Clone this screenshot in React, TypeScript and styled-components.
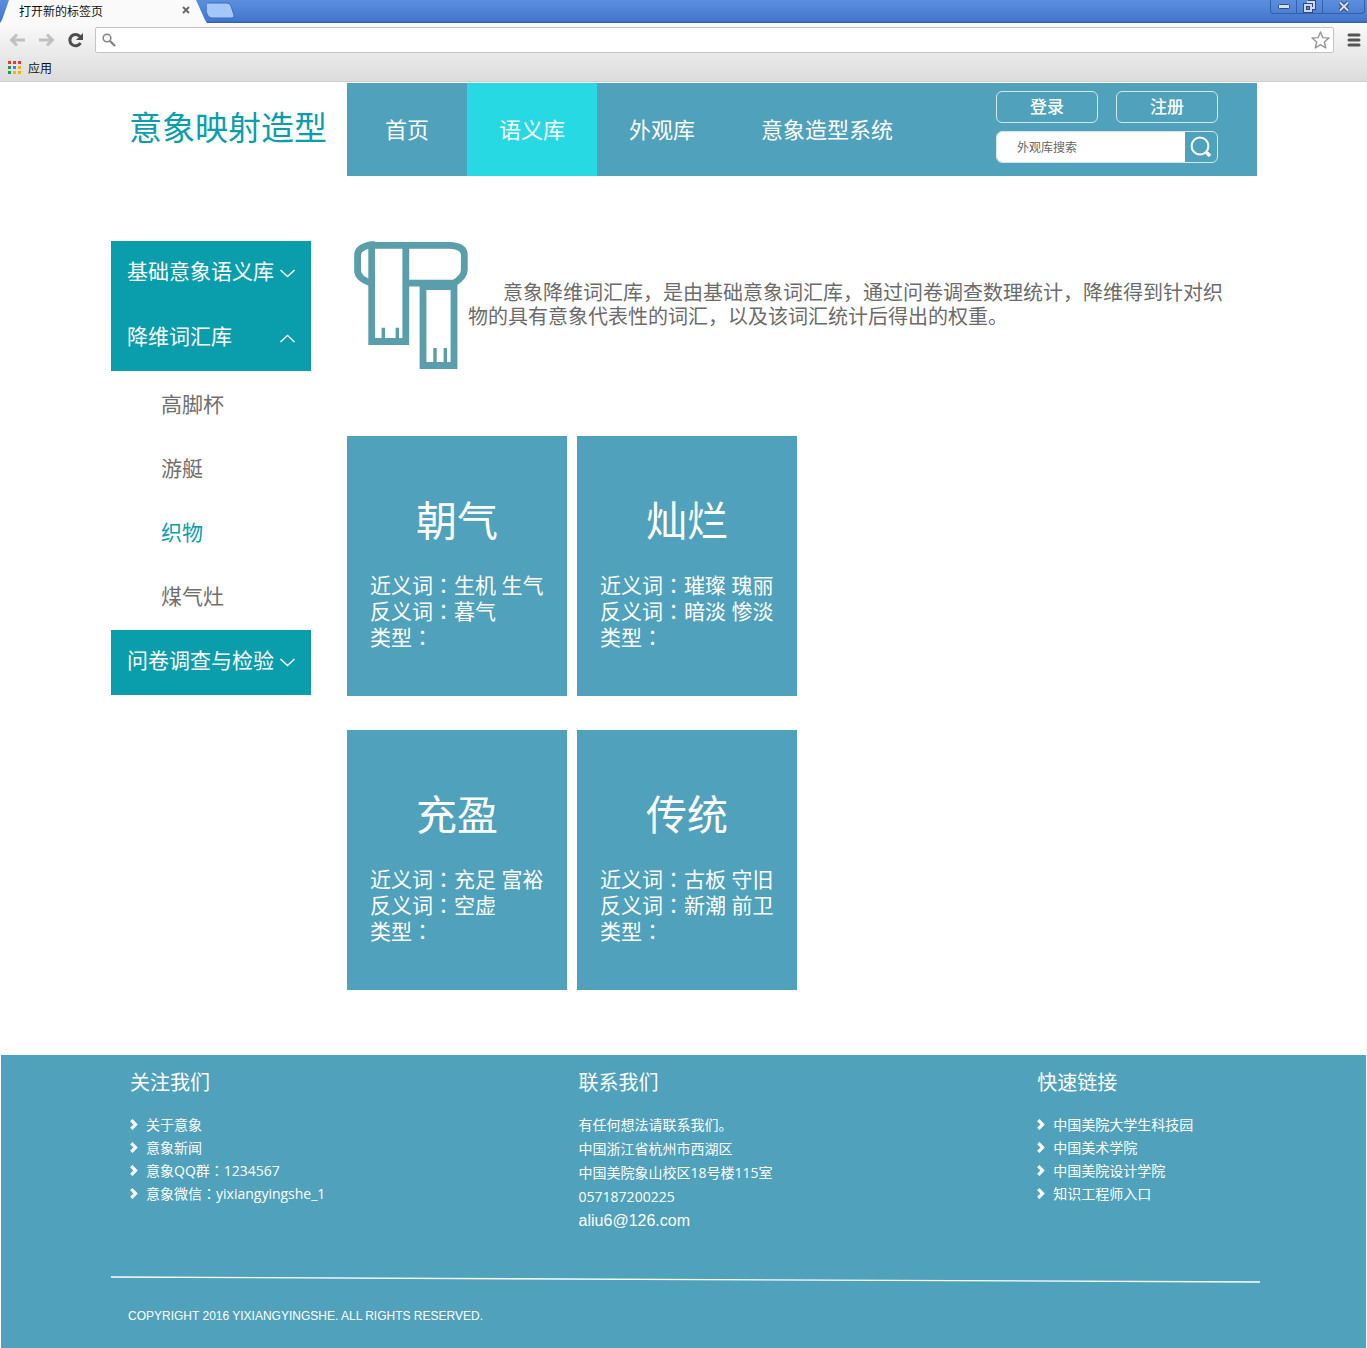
import React from "react";
import styled, { createGlobalStyle } from "styled-components";

const blue = "#50a1bb";
const teal = "#0a9dac";
const cyan = "#27d9e3";
const sans = `"Open Sans", "Noto Sans CJK SC", sans-serif`;

const GlobalStyle = createGlobalStyle`
  * { box-sizing: border-box; }
  body { margin: 0; background: #fff; font-family: ${sans}; }
  h1, h2, h3, p, ul { margin: 0; padding: 0; font-weight: 400; }
  ul { list-style: none; }
  a { color: inherit; text-decoration: none; }
  button { font: inherit; color: inherit; background: none; border: 0; padding: 0; cursor: pointer; }
  svg { display: block; }
`;

/* ---------- browser frame ---------- */

const Browser = styled.div`
  height: 82px;
  margin-bottom: 1px;
  color: #111;
  font-family: "Noto Sans CJK SC", sans-serif;
  font-size: 12px;
  background: linear-gradient(#fafafa 23px, #dcdcdc 81px);
  border-bottom: 1px solid #cfcfcf;
`;

const TabStrip = styled.div`
  display: flex;
  height: 23px;
  background: linear-gradient(#5b8fde, #4377cb 21px, #2f5ba3);
`;

const Tab = styled.div`
  display: flex;
  align-items: center;
  justify-content: space-between;
  width: 207px;
  height: 23px;
  padding: 0 17px 3px 19px;
  background: #fafafa;
  clip-path: polygon(9px 0, 196px 0, 205px 20px, 207px 23px, 0 23px, 2px 20px);
`;

const TabClose = styled.button`
  display: flex;
`;

const NewTab = styled.button`
  align-self: flex-start;
`;

const WindowButtons = styled.div`
  display: flex;
  height: 14px;
  margin-left: auto;
  margin-right: 2px;
  border: 1px solid #335fae;
  border-top: 0;
  border-radius: 0 0 4px 4px;
`;

const WindowButton = styled.button<{ $w: number }>`
  display: flex;
  align-items: center;
  justify-content: center;
  width: ${(p) => p.$w}px;
  & + & { border-left: 1px solid #335fae; }
`;

const Toolbar = styled.div`
  display: flex;
  align-items: center;
  height: 33px;
  padding: 0 6px 0 8px;
`;

const ToolButton = styled.button`
  display: flex;
  justify-content: center;
  width: 19px;
  margin-right: 10px;
`;

const Omnibox = styled.label`
  display: flex;
  flex: 1;
  align-items: center;
  height: 26px;
  margin-right: 13px;
  padding: 0 3px 0 6px;
  background: #fff;
  border: 1px solid #c4c4c4;
  border-radius: 2px;
`;

const Address = styled.input`
  flex: 1;
  min-width: 0;
  border: 0;
  outline: 0;
  background: none;
`;

const Bookmarks = styled.div`
  display: flex;
  align-items: center;
  gap: 7px;
  height: 22px;
  padding-left: 8px;
`;

/* ---------- site header ---------- */

const Container = styled.div`
  padding: 0 110px 0 111px;
`;

const SiteHeader = styled.header`
  display: flex;
  margin-bottom: 65px;
`;

const Logo = styled.h1`
  width: 236px;
  padding-left: 18px;
  color: ${teal};
  font-size: 33px;
  font-weight: 400;
  line-height: 90px;
  white-space: nowrap;
`;

const Bar = styled.div`
  display: flex;
  flex: 1;
  height: 93px;
  background: ${blue};
  color: #fff;
`;

const Nav = styled.nav`
  display: flex;
  font-size: 22px;
`;

const NavLink = styled.a<{ $w: number; $active?: boolean }>`
  width: ${(p) => p.$w}px;
  background: ${(p) => (p.$active ? cyan : "transparent")};
  line-height: 93px;
  text-align: center;
  white-space: nowrap;
`;

const Account = styled.div`
  display: grid;
  grid-template-columns: 102px 102px;
  grid-auto-rows: 32px;
  gap: 8px 18px;
  align-content: start;
  margin-left: auto;
  padding: 8px 39px 0 0;
`;

const OutlineButton = styled.button`
  border: 1px solid #d3e7ee;
  border-radius: 6px;
  color: #fff;
  font-size: 17px;
  font-weight: 500;
  line-height: 30px;
`;

const Search = styled.form`
  display: flex;
  grid-column: 1 / -1;
  border: 1px solid #d3e7ee;
  border-radius: 6px;
  overflow: hidden;
`;

const SearchInput = styled.input`
  flex: 1;
  min-width: 0;
  padding: 0 20px;
  border: 0;
  outline: 0;
  background: #fff;
  font-family: ${sans};
  font-size: 12px;
  &::placeholder { color: #666; opacity: 1; }
`;

const SearchButton = styled.button`
  display: flex;
  align-items: center;
  justify-content: center;
  width: 32px;
`;

/* ---------- body ---------- */

const Body = styled.main`
  display: flex;
  align-items: flex-start;
  margin-bottom: 65px;
`;

const Sidebar = styled.aside`
  flex: none;
  width: 200px;
  margin-right: 36px;
  font-size: 21px;
`;

const Group = styled.button`
  display: flex;
  align-items: center;
  justify-content: space-between;
  width: 100%;
  height: 65px;
  padding: 0 16px;
  background: ${teal};
  color: #fff;
  font-size: 21px;
  line-height: 61px;
  white-space: nowrap;
`;

const GroupLabel = styled.span`
  align-self: flex-start;
`;

const SubLink = styled.a<{ $active?: boolean }>`
  display: block;
  padding-left: 50px;
  color: ${(p) => (p.$active ? teal : "#6f6f6f")};
  line-height: 64px;
`;

const SubList = styled.ul`
  padding: 1px 0 2px;
`;

const Content = styled.section`
  flex: 1;
  min-width: 0;
`;

const Intro = styled.div`
  display: flex;
  align-items: flex-start;
  padding: 0 24px 0 7px;
  margin-bottom: 65px;
`;

const IntroText = styled.p`
  flex: 1;
  padding-top: 40px;
  color: #6b6b6b;
  font-size: 20px;
  line-height: 24px;
  text-indent: 35px;
`;

const Cards = styled.div`
  display: grid;
  grid-template-columns: 220px 220px;
  gap: 34px 10px;
`;

const Card = styled.article`
  height: 260px;
  padding: 54px 23px 0;
  background: ${blue};
  color: #fff;
  font-size: 21px;
  font-weight: 300;
  line-height: 26px;
  white-space: nowrap;
`;

const CardTitle = styled.h2`
  margin-bottom: 22px;
  font-size: 41px;
  line-height: 60px;
  text-align: center;
`;

const Centered = styled.span`
  font-family: "Open Sans", "Noto Sans CJK JP", sans-serif;
`;

/* ---------- footer ---------- */

const Footer = styled.footer`
  margin: 0 1px;
  padding: 16px 106px 24px 110px;
  background: ${blue};
  color: #fff;
  font-size: 14px;
`;

const Columns = styled.div`
  display: grid;
  grid-template-columns: 449fr 459fr 223fr;
  padding-left: 19px;
  min-height: 205px;
`;

const FooterTitle = styled.h3`
  margin-bottom: 18px;
  font-size: 20px;
  line-height: 24px;
`;

const Lines = styled.ul<{ $line: number }>`
  line-height: ${(p) => p.$line}px;
  white-space: nowrap;
`;

const Row = styled.li`
  display: flex;
  align-items: center;
  gap: 8px;
`;

const Email = styled.a`
  font-family: "Liberation Sans", Arial, sans-serif;
  font-size: 16px;
`;

const Copyright = styled.p`
  padding: 25px 0 0 17px;
  font-family: "Liberation Sans", Arial, sans-serif;
  font-size: 12px;
  line-height: 16px;
`;

/* ---------- drawings ---------- */

const Chevron = ({ up }: { up?: boolean }) => (
  <svg width="15" height="9" viewBox="0 0 15 9" fill="none" stroke="#fff" strokeWidth="1.4">
    <path d={up ? "M.5 8 7.5 1.5 14.5 8" : "M.5 1 7.5 7.5 14.5 1"} />
  </svg>
);

const Bullet = () => (
  <svg width="8" height="11" viewBox="0 0 8 11" fill="none" stroke="#fff" strokeWidth="3.2">
    <path d="M1.3 1.2 5.5 5.5 1.3 9.8" />
  </svg>
);

const Arrow = ({ right }: { right?: boolean }) => (
  <svg width="17" height="14" viewBox="0 0 17 14" fill="none" stroke="#c0c0c0" strokeWidth="3">
    <path d={right ? "M1 7h14M9 1.5 14.5 7 9 12.5" : "M16 7H2M8 1.5 2.5 7 8 12.5"} />
  </svg>
);

const Scarf = () => (
  <svg width="114" height="130" viewBox="0 0 114 130" fill="none" stroke="#5a9dab" strokeWidth="6.8">
    <path d="M17.7 1V100.500H51.800V1" />
    <path d="M15 4.300H95Q110.300 4.800 110.300 13.500V29Q110.300 36 100 42.200H53" />
    <path d="M21 3.600H17Q3.600 6.500 3.600 14V30Q3.800 37.500 17 42" />
    <path d="M69 42V124.500H100V42" />
    <path d="M66 44H103" strokeWidth="10" />
    <path d="M29.300 86.700V99M43.300 86.700V99M81 107V123M91.300 107V123" strokeWidth="3.400" />
  </svg>
);

const appColors = ["#e8372c", "#e8372c", "#e8372c", "#1d9a4b", "#2a8cf0", "#f5b400", "#1d9a4b", "#f5b400", "#f5b400"];

const AppsIcon = () => (
  <svg width="13" height="13" viewBox="0 0 13 13">
    {appColors.map((c, i) => (
      <rect key={i} x={(i % 3) * 5} y={Math.floor(i / 3) * 5} width="3" height="3" fill={c} />
    ))}
  </svg>
);

const Chrome = () => (
  <Browser>
    <TabStrip>
      <Tab>
        <span>打开新的标签页</span>
        <TabClose aria-label="关闭标签页">
          <svg width="8" height="8" viewBox="0 0 8 8" stroke="#666" strokeWidth="1.8">
            <path d="M1 1 7 7M7 1 1 7" />
          </svg>
        </TabClose>
      </Tab>
      <NewTab aria-label="新标签页">
        <svg width="30" height="20" viewBox="0 0 30 20">
          <path d="M-3 3H20Q23 3 24 6L27 15Q27.500 18 25 18H5Q1 18 0 14Z" fill="#a3c8f6" stroke="#3b6cc0" />
        </svg>
      </NewTab>
      <WindowButtons>
        <WindowButton $w={25} aria-label="最小化">
          <svg width="12" height="5" viewBox="0 0 12 5">
            <rect x=".5" y=".5" width="11" height="4" rx="1" fill="#d5def0" stroke="#3b4a72" />
          </svg>
        </WindowButton>
        <WindowButton $w={26} aria-label="还原">
          <svg width="13" height="13" viewBox="0 0 13 13" fill="none">
            <path d="M5 2H11V8H9M2 5H8V11H2Z" stroke="#34477a" strokeWidth="4" />
            <path d="M4 2H11V8H9M2 5H8V11H2Z" stroke="#cdd8ee" strokeWidth="2" />
          </svg>
        </WindowButton>
        <WindowButton $w={42} aria-label="关闭">
          <svg width="12" height="11" viewBox="0 0 12 11">
            <path d="M2 1.500 10 9.500M10 1.500 2 9.500" stroke="#34477a" strokeWidth="4" />
            <path d="M2 1.500 10 9.500M10 1.500 2 9.500" stroke="#d7e0f3" strokeWidth="2" />
          </svg>
        </WindowButton>
      </WindowButtons>
    </TabStrip>
    <Toolbar>
      <ToolButton aria-label="后退"><Arrow /></ToolButton>
      <ToolButton aria-label="前进"><Arrow right /></ToolButton>
      <ToolButton aria-label="重新加载">
        <svg width="17" height="16" viewBox="0 0 17 16" fill="none">
          <path d="M13 4.500A5.700 5.700 0 1 0 13.500 11" stroke="#4d4d4d" strokeWidth="3" />
          <path d="M16 1V8H9Z" fill="#4d4d4d" />
        </svg>
      </ToolButton>
      <Omnibox>
        <svg width="14" height="14" viewBox="0 0 14 14" fill="none" stroke="#858585">
          <circle cx="5" cy="5" r="3.800" strokeWidth="1.600" />
          <path d="M8 8 13 13" strokeWidth="2.400" />
        </svg>
        <Address aria-label="地址" />
        <svg width="19" height="18" viewBox="0 0 19 18" fill="none" stroke="#969696" strokeWidth="1.400">
          <path d="M9.500 1 11.800 6.600 18 7 13.300 11 14.800 17 9.500 13.700 4.200 17 5.700 11 1 7 7.200 6.600Z" strokeLinejoin="round" />
        </svg>
      </Omnibox>
      <svg width="14" height="14" viewBox="0 0 14 14" stroke="#555" strokeWidth="3" strokeLinecap="round">
        <path d="M2 2H12M2 7H12M2 12H12" />
      </svg>
    </Toolbar>
    <Bookmarks>
      <AppsIcon />
      <span>应用</span>
    </Bookmarks>
  </Browser>
);

/* ---------- data ---------- */

const navItems = [
  { text: "首页", w: 120 },
  { text: "语义库", w: 130, active: true },
  { text: "外观库", w: 130 },
  { text: "意象造型系统", w: 200 },
];

const subItems = ["高脚杯", "游艇", "织物", "煤气灶"];

const words = [
  { title: "朝气", near: "生机 生气", anti: "暮气" },
  { title: "灿烂", near: "璀璨 瑰丽", anti: "暗淡 惨淡" },
  { title: "充盈", near: "充足 富裕", anti: "空虚" },
  { title: "传统", near: "古板 守旧", anti: "新潮 前卫" },
];

const Colon = () => <Centered>：</Centered>;

const quickLinks = ["中国美院大学生科技园", "中国美术学院", "中国美院设计学院", "知识工程师入口"];

export default function App() {
  return (
    <>
      <GlobalStyle />
      <Chrome />
      <Container>
        <SiteHeader>
          <Logo>意象映射造型</Logo>
          <Bar>
            <Nav>
              {navItems.map((n) => (
                <NavLink key={n.text} href="#" $w={n.w} $active={n.active}>{n.text}</NavLink>
              ))}
            </Nav>
            <Account>
              <OutlineButton>登录</OutlineButton>
              <OutlineButton>注册</OutlineButton>
              <Search onSubmit={(e) => e.preventDefault()}>
                <SearchInput aria-label="外观库搜索" placeholder="外观库搜索" />
                <SearchButton aria-label="搜索">
                  <svg width="22" height="22" viewBox="0 0 22 22" fill="none" stroke="#fff">
                    <circle cx="10" cy="10" r="8.400" strokeWidth="2" />
                    <path d="M16.500 16.500 20 20" strokeWidth="3.400" />
                  </svg>
                </SearchButton>
              </Search>
            </Account>
          </Bar>
        </SiteHeader>
        <Body>
          <Sidebar>
            <Group><GroupLabel>基础意象语义库</GroupLabel><Chevron /></Group>
            <Group><GroupLabel>降维词汇库</GroupLabel><Chevron up /></Group>
            <SubList>
              {subItems.map((s) => (
                <li key={s}><SubLink href="#" $active={s === "织物"}>{s}</SubLink></li>
              ))}
            </SubList>
            <Group><GroupLabel>问卷调查与检验</GroupLabel><Chevron /></Group>
          </Sidebar>
          <Content>
            <Intro>
              <Scarf />
              <IntroText>
                意象降维词汇库，是由基础意象词汇库，通过问卷调查数理统计，降维得到针对织物的具有意象代表性的词汇，以及该词汇统计后得出的权重。
              </IntroText>
            </Intro>
            <Cards>
              {words.map((w) => (
                <Card key={w.title}>
                  <CardTitle>{w.title}</CardTitle>
                  <p>近义词<Colon />{w.near}</p>
                  <p>反义词<Colon />{w.anti}</p>
                  <p>类型<Colon /></p>
                </Card>
              ))}
            </Cards>
          </Content>
        </Body>
      </Container>
      <Footer>
        <Columns>
          <section>
            <FooterTitle>关注我们</FooterTitle>
            <Lines $line={23}>
              <Row><Bullet /><a href="#">关于意象</a></Row>
              <Row><Bullet /><a href="#">意象新闻</a></Row>
              <Row><Bullet /><span>意象QQ群<Colon />1234567</span></Row>
              <Row><Bullet /><span>意象微信<Colon />yixiangyingshe_1</span></Row>
            </Lines>
          </section>
          <section>
            <FooterTitle>联系我们</FooterTitle>
            <Lines $line={24}>
              <li>有任何想法请联系我们。</li>
              <li>中国浙江省杭州市西湖区</li>
              <li>中国美院象山校区18号楼115室</li>
              <li>057187200225</li>
              <li><Email href="mailto:aliu6@126.com">aliu6@126.com</Email></li>
            </Lines>
          </section>
          <section>
            <FooterTitle>快速链接</FooterTitle>
            <Lines $line={23}>
              {quickLinks.map((q) => (
                <Row key={q}><Bullet /><a href="#">{q}</a></Row>
              ))}
            </Lines>
          </section>
        </Columns>
        <svg width="100%" height="7" viewBox="0 0 1150 7" preserveAspectRatio="none">
          <path d="M0 1 1150 6" stroke="#fff" strokeWidth="1.300" />
        </svg>
        <Copyright>COPYRIGHT 2016 YIXIANGYINGSHE. ALL RIGHTS RESERVED.</Copyright>
      </Footer>
    </>
  );
}
